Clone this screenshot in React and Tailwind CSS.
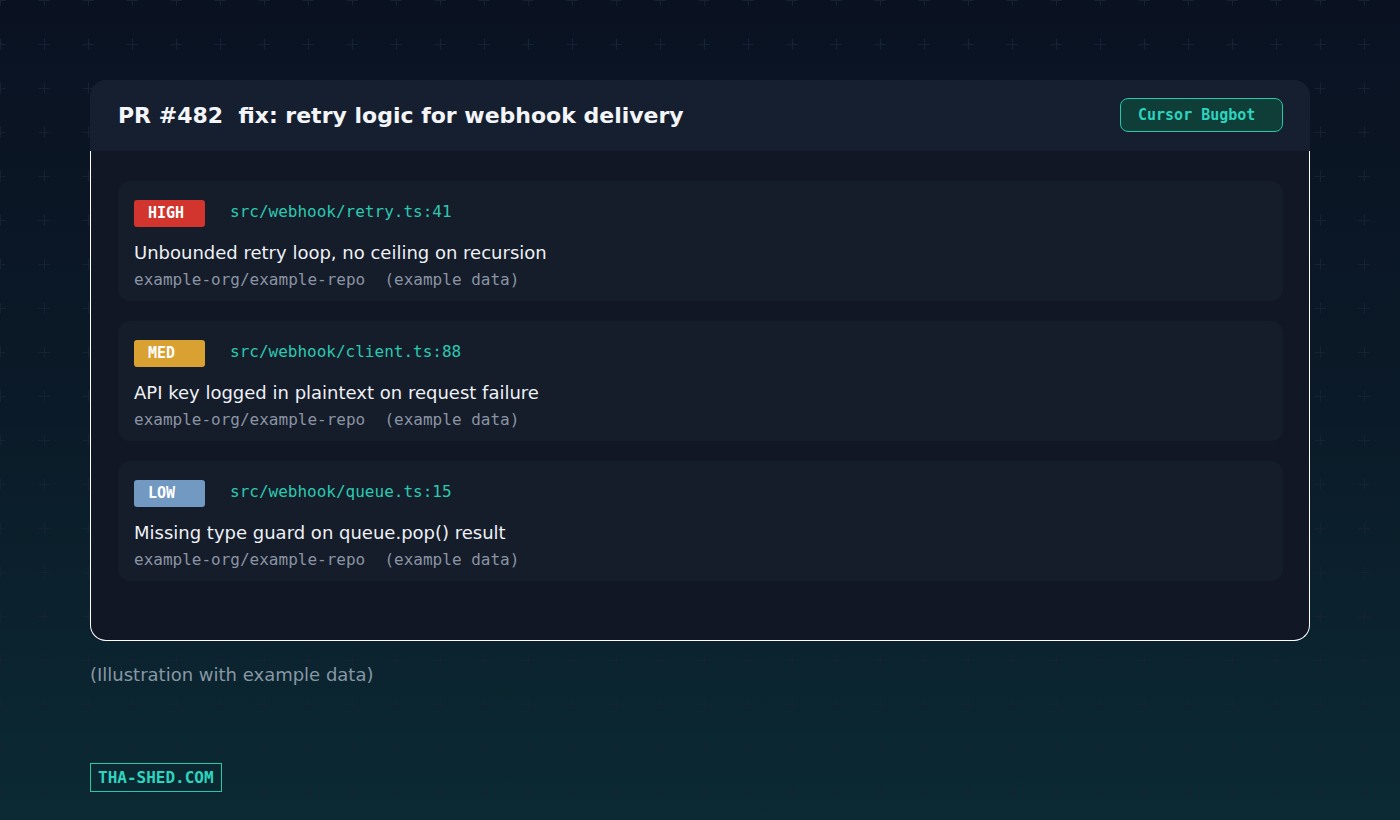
import React from 'react'

const findings = [
    {
        level: 'HIGH',
        badge: 'bg-[#d1352d]',
        file: 'src/webhook/retry.ts:41',
        title: 'Unbounded retry loop, no ceiling on recursion',
    },
    {
        level: 'MED',
        badge: 'bg-[#d9a032]',
        file: 'src/webhook/client.ts:88',
        title: 'API key logged in plaintext on request failure',
    },
    {
        level: 'LOW',
        badge: 'bg-[#7199c2]',
        file: 'src/webhook/queue.ts:15',
        title: 'Missing type guard on queue.pop() result',
    },
]

const mono = "font-['DejaVu_Sans_Mono',monospace]"

// faint plus-sign grid behind everything
const PlusGrid = () => (
    <svg className="absolute inset-0 w-full h-full pointer-events-none" aria-hidden="true">
        <defs>
            <pattern id="plus" x="-22" y="-22" width="44" height="44" patternUnits="userSpaceOnUse">
                <path d="M16.5 22.5h11M22.5 16.5v11" stroke="#152233" strokeWidth="1" />
            </pattern>
        </defs>
        <rect width="100%" height="100%" fill="url(#plus)" />
    </svg>
)

const Finding = ({item}) => (
    <div className="bg-[#151c2a] rounded-xl px-4 pt-[19px] pb-[9px]">
        <div className="flex items-start gap-[25px]">
            <span className={`${item.badge} ${mono} w-[71px] h-[27px] rounded-[3px] pl-[14px] flex items-center text-[15px] font-bold text-white`}>
                {item.level}
            </span>
            <span className={`${mono} text-[16px] leading-[23px] text-[#2cc9b0]`}>{item.file}</span>
        </div>
        <p className="mt-[14px] text-[18px] leading-[24px] text-[#eef1f5]">{item.title}</p>
        <p className={`${mono} mt-[3px] text-[16px] leading-[24px] text-[#8a94a3] whitespace-pre`}>
            {'example-org/example-repo  (example data)'}
        </p>
    </div>
)

export default function App() {
    return (
        <div className="relative w-[1400px] h-[820px] overflow-hidden bg-[linear-gradient(180deg,#0a1222_0%,#0b1a28_50%,#0b2a33_100%)] font-['DejaVu_Sans',sans-serif]">
            <PlusGrid />
            <div className="relative px-[90px] pt-[80px]">
                {/* PR card */}
                <div className="w-[1220px]">
                    <header className="h-[71px] bg-[#161f2f] rounded-t-2xl pl-[28px] pr-[27px] flex items-center justify-between">
                        <h1 className="text-[22px] font-bold text-[#f3f5f8] whitespace-pre">
                            {'PR #482  fix: retry logic for webhook delivery'}
                        </h1>
                        <span className={`${mono} w-[163px] h-[34px] mb-[1px] rounded-lg border border-[#22c9aa] bg-[#0f3d37] pl-[17px] flex items-center text-[15px] font-bold text-[#2dd4bf]`}>
                            Cursor Bugbot
                        </span>
                    </header>
                    <div className="bg-[#111725] border border-t-0 border-white rounded-b-2xl pl-[27px] pr-[26px] pt-[30px] pb-[59px] flex flex-col gap-5">
                        {findings.map((item) => (
                            <Finding key={item.level} item={item} />
                        ))}
                    </div>
                </div>

                <p className="mt-[20px] text-[18px] text-[#8797a5]">(Illustration with example data)</p>

                <div className={`${mono} mt-[75px] inline-flex items-center h-[29px] px-[7px] border border-[#22c9aa] text-[16px] font-bold text-[#2dd4bf]`}>
                    THA-SHED.COM
                </div>
            </div>
        </div>
    )
}
